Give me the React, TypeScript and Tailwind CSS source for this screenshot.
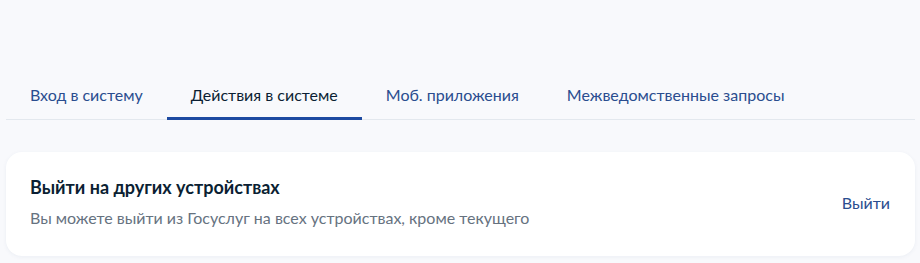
const tabs = ['Вход в систему', 'Действия в системе', 'Моб. приложения', 'Межведомственные запросы'];

export default function App() {
  const active = 1;
  return (
    <div className="min-h-[263px] w-[920px] bg-[#f8f9fc] pl-[6px] pr-[5px] pt-[83px] font-['Lato','Noto_Sans',sans-serif]">
      <div className="flex border-b border-[#e3e8ee]">
        {tabs.map((t, i) => (
          <div
            key={t}
            className={
              'px-6 pb-[10px] text-[16px] leading-[24px] border-b-[3px] -mb-px ' +
              (i === active ? 'border-[#1d4aa1] text-[#0b1f33]' : 'border-transparent text-[#2a4d8f]')
            }
          >
            {t}
          </div>
        ))}
      </div>
      <div className="mt-[32px] flex items-center justify-between rounded-2xl bg-white pl-6 pr-[25px] pt-[23px] pb-[26px] shadow-[0_1px_4px_rgba(30,60,120,0.06)]">
        <div>
          <div className="text-[18px] font-bold leading-[24px] text-[#0b1f33]">Выйти на других устройствах</div>
          <div className="mt-[7px] text-[16px] leading-[24px] text-[#66727f]">
            Вы можете выйти из Госуслуг на всех устройствах, кроме текущего
          </div>
        </div>
        <div className="text-[16px] leading-[24px] text-[#2a4d8f]">Выйти</div>
      </div>
    </div>
  );
}
